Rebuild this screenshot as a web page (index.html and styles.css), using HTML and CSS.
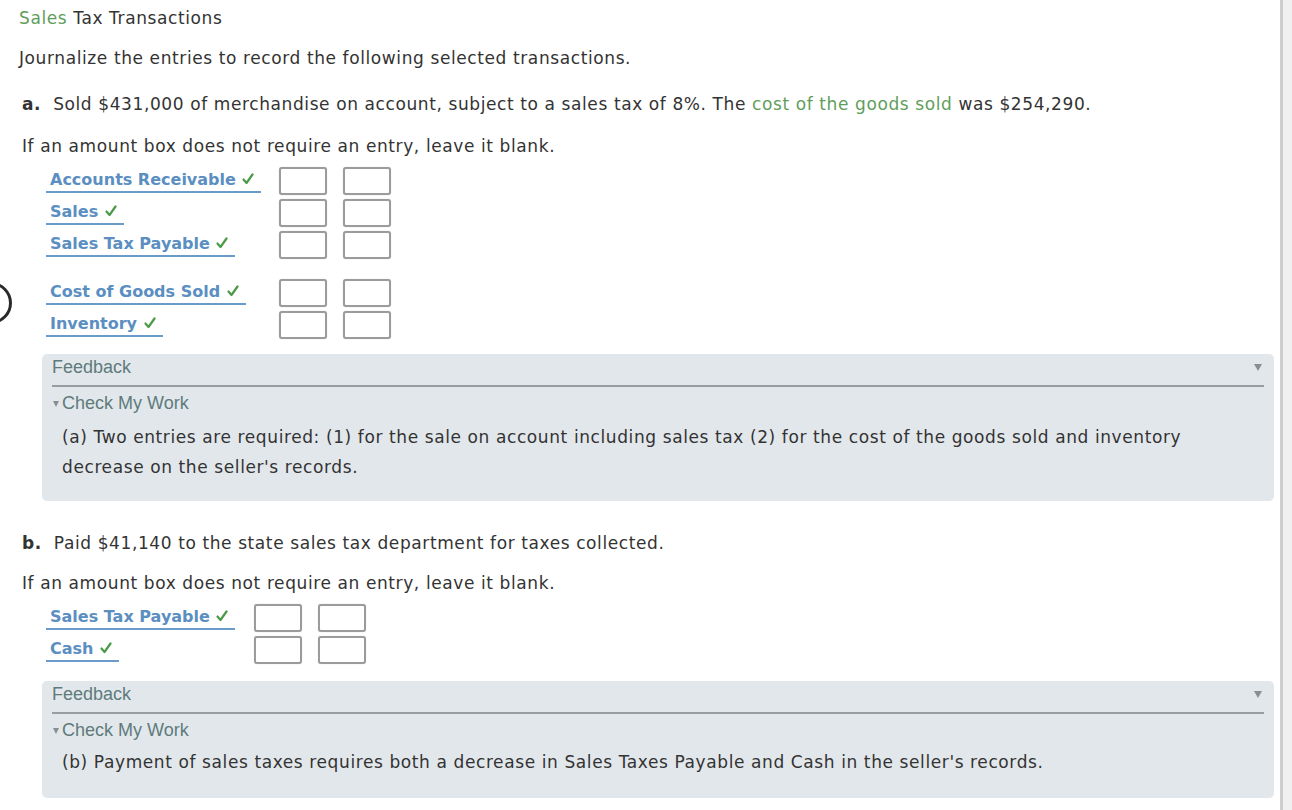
FILE: index.html
```html
<!DOCTYPE html>
<html>
<head>
<meta charset="utf-8">
<link rel="stylesheet" href="styles.css">
</head>
<body>
<div class="page">
  <main class="main">
    <div class="title"><span class="green">Sales</span> Tax Transactions</div>
    <div class="intro">Journalize the entries to record the following selected transactions.</div>

    <div class="question q-a"><b>a.</b>&nbsp; Sold $431,000 of merchandise on account, subject to a sales tax of 8%. The <span class="green">cost of the goods sold</span> was $254,290.</div>
    <div class="hint hint-a">If an amount box does not require an entry, leave it blank.</div>

    <div class="journal journal-a">
      <div class="row"><span class="acct">Accounts Receivable <svg class="chk" viewBox="0 0 12 12"><path d="M1.5 6.5 L4.5 10 L10.5 1.5"/></svg></span><span class="box"></span><span class="box"></span></div>
      <div class="row"><span class="acct">Sales <svg class="chk" viewBox="0 0 12 12"><path d="M1.5 6.5 L4.5 10 L10.5 1.5"/></svg></span><span class="box"></span><span class="box"></span></div>
      <div class="row"><span class="acct">Sales Tax Payable <svg class="chk" viewBox="0 0 12 12"><path d="M1.5 6.5 L4.5 10 L10.5 1.5"/></svg></span><span class="box"></span><span class="box"></span></div>
      <div class="spacer"></div>
      <div class="row"><span class="acct">Cost of Goods Sold <svg class="chk" viewBox="0 0 12 12"><path d="M1.5 6.5 L4.5 10 L10.5 1.5"/></svg></span><span class="box"></span><span class="box"></span></div>
      <div class="row"><span class="acct">Inventory <svg class="chk" viewBox="0 0 12 12"><path d="M1.5 6.5 L4.5 10 L10.5 1.5"/></svg></span><span class="box"></span><span class="box"></span></div>
    </div>

    <div class="feedback fb-a">
      <div class="fb-head">Feedback<span class="fb-arrow"></span></div>
      <div class="cmw"><span class="tri"></span>Check My Work</div>
      <div class="fb-text">(a) Two entries are required: (1) for the sale on account including sales tax (2) for the cost of the goods sold and inventory decrease on the seller's records.</div>
    </div>

    <div class="question q-b"><b>b.</b>&nbsp; Paid $41,140 to the state sales tax department for taxes collected.</div>
    <div class="hint hint-b">If an amount box does not require an entry, leave it blank.</div>

    <div class="journal journal-b">
      <div class="row"><span class="acct">Sales Tax Payable <svg class="chk" viewBox="0 0 12 12"><path d="M1.5 6.5 L4.5 10 L10.5 1.5"/></svg></span><span class="box"></span><span class="box"></span></div>
      <div class="row"><span class="acct">Cash <svg class="chk" viewBox="0 0 12 12"><path d="M1.5 6.5 L4.5 10 L10.5 1.5"/></svg></span><span class="box"></span><span class="box"></span></div>
    </div>

    <div class="feedback fb-b">
      <div class="fb-head">Feedback<span class="fb-arrow"></span></div>
      <div class="cmw"><span class="tri"></span>Check My Work</div>
      <div class="fb-text fb-text-b">(b) Payment of sales taxes requires both a decrease in Sales Taxes Payable and Cash in the seller's records.</div>
    </div>
  </main>
  <aside class="scrollstrip"></aside>
  <div class="ring"></div>
</div>
</body>
</html>
```
FILE: styles.css
```css
html, body {
  margin: 0;
  padding: 0;
  background: #fff;
}
body {
  font-family: "DejaVu Sans", Verdana, sans-serif;
  font-size: 17px;
  letter-spacing: 0.6px;
  color: #333;
}
.page {
  display: flex;
  width: 1292px;
  height: 810px;
  overflow: hidden;
  position: relative;
}
.main {
  width: 1280px;
  flex: none;
}
.scrollstrip {
  flex: 1;
  background: #f0f0f0;
  border-left: 3px solid #cdcdcd;
}
.ring {
  position: absolute;
  left: -30px;
  top: 282px;
  width: 36px;
  height: 36px;
  border: 3px solid #2a2a2a;
  border-radius: 50%;
}
.green { color: #5f9e5c; }

.title {
  line-height: 22px;
  margin: 7px 0 0 19px;
}
.intro {
  line-height: 22px;
  margin: 18px 0 0 19px;
}
.question {
  line-height: 22px;
  margin-left: 22px;
}
.question b { font-weight: bold; }
.q-a { margin-top: 24px; }
.hint {
  line-height: 22px;
  margin-left: 22px;
}
.hint-a { margin-top: 20px; }
.q-b { margin-top: 31px; }
.hint-b { margin-top: 18px; }

.journal {
  margin-left: 46px;
  margin-top: 9px;
}
.row {
  display: grid;
  grid-template-columns: 217px 48px 48px;
  column-gap: 16px;
  height: 32px;
  align-items: start;
}
.journal-b .row {
  grid-template-columns: 192px 48px 48px;
}
.spacer { height: 16px; }
.acct {
  justify-self: start;
  font-size: 16px;
  letter-spacing: 0;
  font-weight: bold;
  color: #5b8ec1;
  line-height: 22px;
  padding: 3px 7px 0 4px;
  border-bottom: 2px solid #6a9bc9;
  white-space: nowrap;
}
.chk {
  width: 12px;
  height: 12px;
  margin-left: 1px;
  vertical-align: 0;
  fill: none;
  stroke: #4b9a47;
  stroke-width: 2.2;
  stroke-linecap: round;
  stroke-linejoin: round;
}
.box {
  box-sizing: border-box;
  margin-top: 1px;
  width: 48px;
  height: 28px;
  border: 2px solid #9b9b9b;
  border-radius: 3px;
  background: #fff;
  box-shadow: 0 0 1px rgba(0,0,0,0.25);
}

.feedback {
  margin-left: 42px;
  width: 1232px;
  box-sizing: border-box;
  background: #e2e7eb;
  border-radius: 5px;
  padding: 1px 10px 0;
}
.fb-a { margin-top: 12px; padding-bottom: 19px; }
.fb-b { margin-top: 14px; padding-bottom: 19px; height: 117px; }
.fb-head {
  font-family: "Liberation Sans", Arial, sans-serif;
  font-size: 18px;
  letter-spacing: 0;
  line-height: 24px;
  color: #5e7b7c;
  padding-bottom: 6px;
  border-bottom: 2px solid #989da1;
  position: relative;
}
.fb-arrow {
  position: absolute;
  right: 2px;
  top: 9px;
  width: 0;
  height: 0;
  border-left: 4px solid transparent;
  border-right: 4px solid transparent;
  border-top: 7px solid #8a8e92;
}
.cmw {
  font-family: "Liberation Sans", Arial, sans-serif;
  font-size: 18px;
  letter-spacing: 0;
  line-height: 24px;
  padding-top: 4px;
  color: #5e7b7c;
  display: flex;
  align-items: center;
}
.tri {
  width: 0;
  height: 0;
  border-left: 3px solid transparent;
  border-right: 3px solid transparent;
  border-top: 6px solid #8a8e92;
  margin: 2px 3px 0 1px;
}
.fb-text {
  line-height: 30px;
  padding-left: 10px;
  margin-top: 7px;
  padding-right: 30px;
}
.fb-text-b { margin-top: 5px; }
```
